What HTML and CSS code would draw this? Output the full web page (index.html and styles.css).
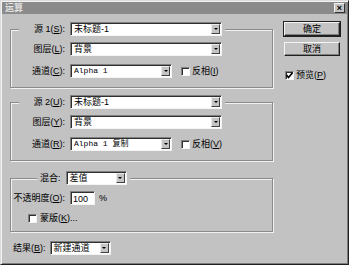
FILE: index.html
```html
<!DOCTYPE html>
<html lang="zh">
<head>
    <meta charset="UTF-8">
    <title>运算</title>
    <link rel="stylesheet" href="styles.css">
</head>
<body>

    <div class="window">
        <div class="titlebar">
            <span class="title">运算</span>
            <span class="close">×</span>
        </div>

        <div class="dialog">
            <div class="main">

                <fieldset class="group">
                    <legend class="row">
                        <span class="lbl">源 1(<u>S</u>):</span>
                        <div class="select wide"><span>未标题-1</span><i class="arrow"></i></div>
                    </legend>
                    <div class="row first">
                        <span class="lbl">图层(<u>L</u>):</span>
                        <div class="select wide"><span>背景</span><i class="arrow"></i></div>
                    </div>
                    <div class="row">
                        <span class="lbl">通道(<u>C</u>):</span>
                        <div class="select narrow"><span class="mono">Alpha 1</span><i class="arrow"></i></div>
                        <span class="check"></span>
                        <span class="check-text">反相(<u>I</u>)</span>
                    </div>
                </fieldset>

                <fieldset class="group second">
                    <legend class="row">
                        <span class="lbl">源 2(<u>U</u>):</span>
                        <div class="select wide"><span>未标题-1</span><i class="arrow"></i></div>
                    </legend>
                    <div class="row first">
                        <span class="lbl">图层(<u>Y</u>):</span>
                        <div class="select wide"><span>背景</span><i class="arrow"></i></div>
                    </div>
                    <div class="row">
                        <span class="lbl">通道(<u>R</u>):</span>
                        <div class="select narrow"><span class="mono">Alpha 1 复制</span><i class="arrow"></i></div>
                        <span class="check"></span>
                        <span class="check-text">反相(<u>V</u>)</span>
                    </div>
                </fieldset>

                <fieldset class="group blend">
                    <legend class="row">
                        <span class="lbl short">混合:</span>
                        <div class="select mode"><span>差值</span><i class="arrow"></i></div>
                    </legend>
                    <div class="row first">
                        <span class="lbl">不透明度(<u>O</u>):</span>
                        <div class="field"><span>100</span></div>
                        <span class="unit">%</span>
                    </div>
                    <div class="row mask">
                        <span class="check"></span>
                        <span class="check-text">蒙版(<u>K</u>)...</span>
                    </div>
                </fieldset>

                <div class="row result">
                    <span class="lbl">结果(<u>B</u>):</span>
                    <div class="select target"><span>新建通道</span><i class="arrow"></i></div>
                </div>

            </div>

            <div class="side">
                <button class="btn default">确定</button>
                <button class="btn">取消</button>
                <div class="row preview">
                    <span class="check checked">
                        <svg width="7" height="7" viewBox="0 0 7 7"><polyline points="0.5,3 2.5,5.5 6.5,0.8" fill="none" stroke="#000" stroke-width="1.6"/></svg>
                    </span>
                    <span class="check-text">预览(<u>P</u>)</span>
                </div>
            </div>
        </div>
    </div>

</body>
</html>
```

FILE: styles.css
```css
body {
    margin: 0;
    padding: 0;
    background-color: #c2c2c2;
    font-family: "Liberation Sans", "Noto Sans CJK SC", sans-serif;
    font-size: 9px;
    color: #000;
}

.window {
    width: 349px;
    height: 265px;
    box-sizing: border-box;
    background-color: #c2c2c2;
    border: 1px solid;
    border-color: #dcdcdc #202020 #202020 #dcdcdc;
    box-shadow: inset 1px 1px 0 #f4f4f4, inset -1px -1px 0 #7c7c7c;
    padding: 1px;
}

.titlebar {
    height: 12px;
    background-color: #8b8b8b;
    display: flex;
    align-items: center;
    justify-content: space-between;
    padding: 0 2px 0 3px;
}

.title {
    color: #e2e2e2;
    font-size: 9px;
    font-weight: bold;
    line-height: 12px;
}

.close {
    width: 9px;
    height: 8px;
    background-color: #c4c4c4;
    border: 1px solid;
    border-color: #f2f2f2 #303030 #303030 #f2f2f2;
    font-size: 9px;
    line-height: 8px;
    text-align: center;
    font-weight: bold;
}

.dialog {
    display: flex;
    padding: 8px 7px 0 8px;
}

.main {
    width: 263px;
}

.side {
    margin-left: 11px;
    display: flex;
    flex-direction: column;
}

/* etched group frames */
.group {
    margin: 0;
    padding: 6px 0 9px 8px;
    border: 1px solid #8a8a8a;
    box-shadow: 1px 1px 0 #f2f2f2, inset 1px 1px 0 #f2f2f2;
    min-width: 0;
}

.group legend {
    padding: 0 3px;
    background-color: #c2c2c2;
}

.second {
    margin-top: 7px;
}

.blend {
    margin-top: 10px;
    padding-bottom: 6px;
}

.blend legend {
    margin-left: 18px;
    padding-left: 3px;
}

.row {
    display: flex;
    align-items: center;
    height: 14px;
    line-height: 14px;
    white-space: nowrap;
}

.group .row {
    margin-top: 8px;
}

.group .row.first {
    margin-top: 0;
}

.group > .row {
    padding-left: 3px;
}

.lbl {
    width: 43px;
    margin-right: 5px;
    display: flex;
    justify-content: flex-end;
}

.lbl.short {
    width: auto;
    margin-right: 5px;
}

u {
    text-decoration: underline;
}

/* dropdowns */
.select {
    height: 14px;
    box-sizing: border-box;
    background-color: #fff;
    border: 1px solid;
    border-color: #808080 #f4f4f4 #f4f4f4 #808080;
    box-shadow: inset 1px 1px 0 #303030;
    display: flex;
    align-items: center;
    justify-content: space-between;
    padding-left: 3px;
}

.select span {
    line-height: 12px;
}

.mono {
    font-family: "Liberation Mono", "Noto Sans CJK SC", monospace;
    font-size: 8px;
}

.wide {
    width: 152px;
}

.narrow {
    width: 102px;
}

.mode {
    width: 61px;
}

.target {
    width: 61px;
}

.arrow {
    width: 9px;
    height: 10px;
    margin-right: 1px;
    background-color: #c4c4c4;
    border: 1px solid;
    border-color: #ececec #404040 #404040 #ececec;
    box-sizing: border-box;
    display: flex;
    align-items: center;
    justify-content: center;
}

.arrow::after {
    content: "";
    border-left: 2px solid transparent;
    border-right: 2px solid transparent;
    border-top: 2px solid #000;
}

.field {
    width: 25px;
    height: 14px;
    box-sizing: border-box;
    background-color: #fff;
    border: 1px solid;
    border-color: #808080 #f4f4f4 #f4f4f4 #808080;
    box-shadow: inset 1px 1px 0 #303030;
    padding-left: 2px;
}

.field span {
    line-height: 12px;
}

.unit {
    margin-left: 4px;
}

/* checkboxes */
.check {
    width: 9px;
    height: 9px;
    box-sizing: border-box;
    background-color: #fff;
    border: 1px solid;
    border-color: #808080 #f4f4f4 #f4f4f4 #808080;
    box-shadow: inset 1px 1px 0 #303030;
    margin-left: 9px;
    margin-right: 2px;
    display: flex;
    align-items: center;
    justify-content: center;
}

.group > .mask {
    padding-left: 9px;
    margin-top: 6px;
}

.mask .check {
    margin-left: 0;
    margin-right: 3px;
}

.result {
    margin-top: 9px;
}

.result .lbl {
    width: auto;
    margin-left: 3px;
    margin-right: 4px;
}

/* buttons */
.btn {
    width: 56px;
    height: 14px;
    padding: 0;
    background-color: #c4c4c4;
    border: 1px solid;
    border-color: #f4f4f4 #202020 #202020 #f4f4f4;
    box-shadow: inset -1px -1px 0 #808080;
    font-family: "Liberation Sans", "Noto Sans CJK SC", sans-serif;
    font-size: 9px;
    line-height: 12px;
    color: #000;
}

.btn.default {
    outline: 1px solid #202020;
}

.btn + .btn {
    margin-top: 6px;
}

.preview {
    margin-top: 12px;
}

.preview .check {
    margin-left: 1px;
}
```
